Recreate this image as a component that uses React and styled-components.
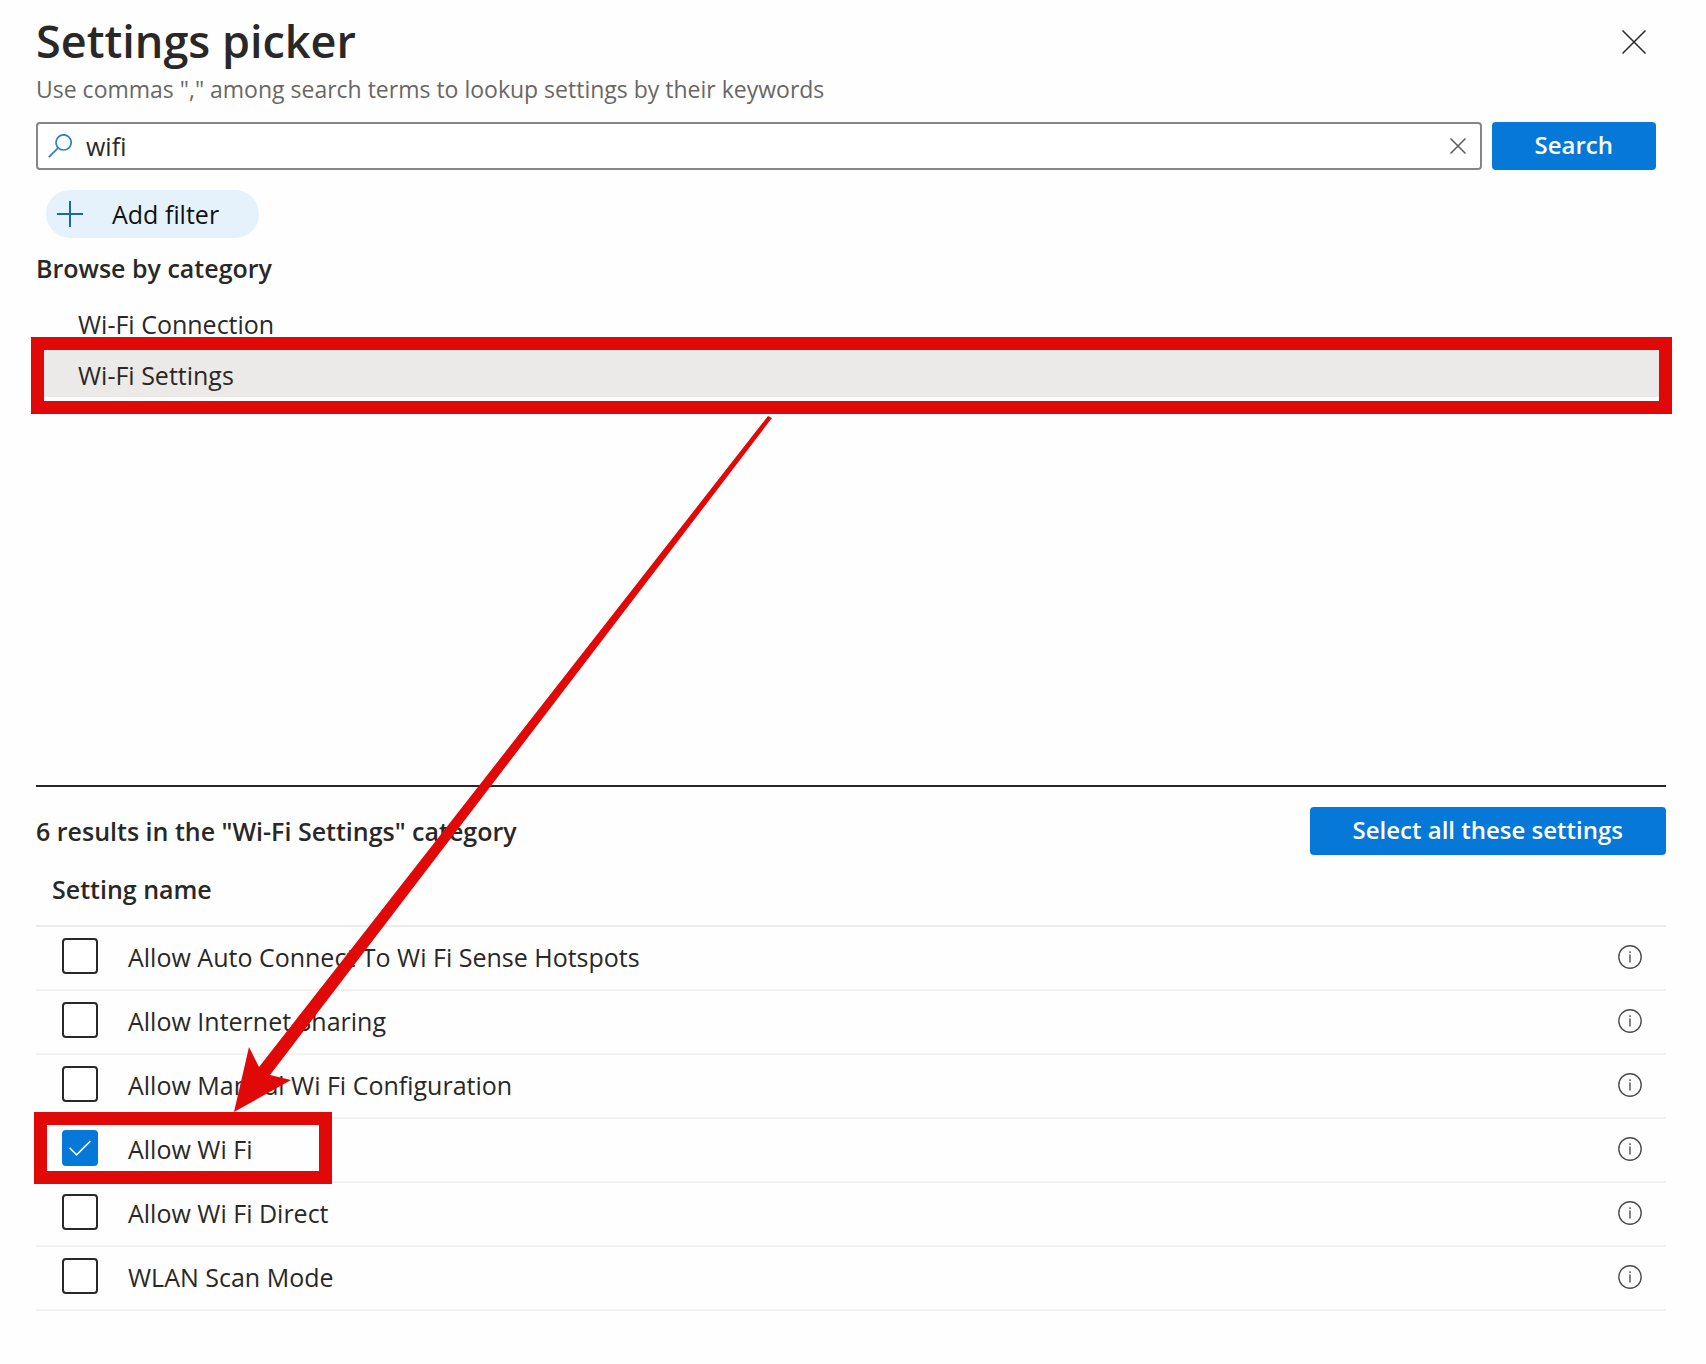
import React, { useState } from "react";
import styled, { createGlobalStyle } from 'styled-components'

const GlobalStyle = createGlobalStyle`
    * {
        box-sizing: border-box;
    }
    body {
        margin: 0;
        background: #fefefe;
        color: #292827;
        font-family: "Open Sans", "Noto Sans", sans-serif;
        font-size: 25px;
        line-height: 32px;
    }
    button, input {
        font: inherit;
        color: inherit;
    }
    svg {
        display: block;
    }
`

const Panel = styled.main`
    position: relative;
    padding: 8px 40px 52px 36px;
`

const Header = styled.header`
    display: flex;
    justify-content: space-between;
    align-items: flex-start;
    padding-right: 8px;
`

const Title = styled.h1`
    margin: 0;
    font-size: 45px;
    line-height: 66px;
    font-weight: 600;
`

const Subtitle = styled.p`
    margin: 0;
    font-size: 23px;
    line-height: 30px;
    color: #696765;
`

const IconButton = styled.button`
    display: flex;
    align-items: center;
    justify-content: center;
    flex: none;
    width: ${props => props.$size}px;
    height: ${props => props.$size}px;
    padding: 0;
    border: none;
    background: none;
    cursor: pointer;
`

const CloseButton = styled(IconButton)`
    margin-top: 10px;
`

const SearchForm = styled.form`
    display: flex;
    gap: 10px;
    margin-top: 18px;
    padding-right: 10px;
`

const SearchBox = styled.div`
    display: flex;
    align-items: center;
    flex: 1;
    height: 48px;
    padding: 0 4px 0 10px;
    border: 2px solid #868686;
    border-radius: 4px;
    background: #fff;
`

const SearchInput = styled.input`
    flex: 1;
    min-width: 0;
    padding: 0 0 0 14px;
    border: none;
    outline: none;
    background: none;
`

const PrimaryButton = styled.button`
    height: 48px;
    padding: 0 43px 2px;
    border: none;
    border-radius: 4px;
    background: #0678d7;
    color: #fff;
    font-size: 24px;
    font-weight: 600;
    cursor: pointer;
`

const FilterButton = styled.button`
    display: flex;
    align-items: center;
    gap: 29px;
    height: 48px;
    margin: 20px 0 0 10px;
    padding: 0 40px 0 11px;
    border: none;
    border-radius: 24px;
    background: #e6f2fb;
    color: #111;
    cursor: pointer;
`

const SectionTitle = styled.h2`
    margin: 0;
    font-size: 25px;
    font-weight: 600;
`

const Browse = styled.section`
    min-height: 549px;
    padding-top: 14px;
    border-bottom: 2px solid #292827;
`

const CategoryList = styled.ul`
    margin: 12px 0 0;
    padding: 0;
    list-style: none;
`

const Category = styled.li`
    position: relative;
    height: 50px;
    margin-bottom: 1px;
    background: ${props => props.$selected ? '#ebeae8' : 'none'};
`

const CategoryButton = styled.button`
    width: 100%;
    height: 100%;
    padding: 6px 42px 0;
    border: none;
    background: none;
    text-align: left;
    cursor: pointer;
`

// Red frame drawn over the category that is picked
const CategoryFrame = styled.span`
    position: absolute;
    inset: -10px -6px -17px -5px;
    border: 13px solid #e00907;
    pointer-events: none;
`

const ResultsBar = styled.div`
    display: flex;
    align-items: center;
    justify-content: space-between;
    padding: 20px 0 18px;
`

const Table = styled.table`
    width: 100%;
    border-collapse: separate;
    border-spacing: 0;
`

const NameHeader = styled.th`
    height: 54px;
    padding: 0 16px 20px;
    border-bottom: 2px solid #edebe9;
    font-weight: 600;
    text-align: left;
`

const Cell = styled.td`
    position: relative;
    height: 64px;
    padding: 0 26px 2px;
    border-bottom: 2px solid #f3f2f1;
`

const InfoCell = styled(Cell)`
    width: 72px;
    padding: 0 24px 2px;
`

const SettingLabel = styled.label`
    display: flex;
    align-items: center;
    gap: 30px;
    cursor: pointer;
`

const CheckWrap = styled.span`
    display: grid;
    place-items: center;
    margin-bottom: 2px;
    & > * {
        grid-area: 1 / 1;
    }
    svg {
        pointer-events: none;
    }
`

const Checkbox = styled.input`
    appearance: none;
    width: 36px;
    height: 36px;
    margin: 0;
    border: 2px solid #292827;
    border-radius: 4px;
    background: #fff;
    &:checked {
        border-color: #0678d7;
        background: #0678d7;
    }
`

const SettingFrame = styled.span`
    position: absolute;
    top: -7px;
    left: -2px;
    width: 298px;
    height: 72px;
    border: 13px solid #e00907;
    pointer-events: none;
`

const Arrow = styled.svg`
    position: absolute;
    top: 414px;
    left: 232px;
    pointer-events: none;
`

const CrossIcon = ({ size, color }) => (
    <svg width={size} height={size} viewBox={`0 0 ${size} ${size}`} stroke={color} strokeWidth='1.5' aria-hidden='true'>
        <path d={`M0.5 0.5L${size - 0.5} ${size - 0.5}M${size - 0.5} 0.5L0.5 ${size - 0.5}`} />
    </svg>
)

const SearchIcon = () => (
    <svg width='24' height='24' viewBox='0 0 24 24' fill='none' stroke='#2f7fcb' strokeWidth='1.7' aria-hidden='true'>
        <circle cx='15.6' cy='8.4' r='7.6' />
        <path d='M10.2 13.8L0.8 23.2' />
    </svg>
)

const PlusIcon = () => (
    <svg width='26' height='26' viewBox='0 0 26 26' stroke='#1c66ad' strokeWidth='2' aria-hidden='true'>
        <path d='M13 0V26M0 13H26' />
    </svg>
)

const CheckIcon = () => (
    <svg width='22' height='16' viewBox='0 0 22 16' fill='none' stroke='#fff' strokeWidth='1.6' aria-hidden='true'>
        <path d='M0.6 7.8L7.6 14.8L21.4 1' />
    </svg>
)

const InfoIcon = () => (
    <svg width='24' height='24' viewBox='0 0 24 24' fill='none' stroke='#4f4d4b' strokeWidth='1.4' aria-hidden='true'>
        <circle cx='12' cy='12' r='11.2' />
        <path d='M12 9.6V17.6M12 6.2V8' />
    </svg>
)

const categories = ['Wi-Fi Connection', 'Wi-Fi Settings']

const settings = [
    'Allow Auto Connect To Wi Fi Sense Hotspots',
    'Allow Internet Sharing',
    'Allow Manual Wi Fi Configuration',
    'Allow Wi Fi',
    'Allow Wi Fi Direct',
    'WLAN Scan Mode',
]

const App = () => {
    const [term, setTerm] = useState('wifi');
    const [category, setCategory] = useState('Wi-Fi Settings');
    const [checked, setChecked] = useState(['Allow Wi Fi']);

    const toggle = (name) => {
        setChecked(checked.includes(name) ? checked.filter(c => c !== name) : [...checked, name])
    }

    return (
        <Panel>
            <GlobalStyle />
            <Header>
                <div>
                    <Title>Settings picker</Title>
                    <Subtitle>Use commas "," among search terms to lookup settings by their keywords</Subtitle>
                </div>
                <CloseButton $size={48} aria-label='Close'>
                    <CrossIcon size={24} color='#292827' />
                </CloseButton>
            </Header>

            <SearchForm onSubmit={e => e.preventDefault()}>
                <SearchBox>
                    <SearchIcon />
                    <SearchInput
                        type='text'
                        name='search'
                        aria-label='Search settings'
                        value={term}
                        onChange={e => setTerm(e.target.value)}
                    />
                    <IconButton $size={36} type='button' aria-label='Clear' onClick={() => setTerm('')}>
                        <CrossIcon size={16} color='#5d5b59' />
                    </IconButton>
                </SearchBox>
                <PrimaryButton type='submit'>Search</PrimaryButton>
            </SearchForm>
            <FilterButton>
                <PlusIcon />
                Add filter
            </FilterButton>

            <Browse>
                <SectionTitle>Browse by category</SectionTitle>
                <CategoryList>
                    {categories.map(name => (
                        <Category key={name} $selected={name === category}>
                            <CategoryButton onClick={() => setCategory(name)}>{name}</CategoryButton>
                            {name === category && <CategoryFrame />}
                        </Category>
                    ))}
                </CategoryList>
            </Browse>

            <ResultsBar>
                <SectionTitle>6 results in the "Wi-Fi Settings" category</SectionTitle>
                <PrimaryButton onClick={() => setChecked(settings)}>Select all these settings</PrimaryButton>
            </ResultsBar>
            <Table>
                <thead>
                    <tr>
                        <NameHeader colSpan={2}>Setting name</NameHeader>
                    </tr>
                </thead>
                <tbody>
                    {settings.map(name => (
                        <tr key={name}>
                            <Cell>
                                <SettingLabel>
                                    <CheckWrap>
                                        <Checkbox
                                            type='checkbox'
                                            checked={checked.includes(name)}
                                            onChange={() => toggle(name)}
                                        />
                                        {checked.includes(name) && <CheckIcon />}
                                    </CheckWrap>
                                    {name}
                                </SettingLabel>
                                {name === 'Allow Wi Fi' && <SettingFrame />}
                            </Cell>
                            <InfoCell>
                                <IconButton $size={24} aria-label={`About ${name}`}>
                                    <InfoIcon />
                                </IconButton>
                            </InfoCell>
                        </tr>
                    ))}
                </tbody>
            </Table>

            <Arrow width='542' height='700' viewBox='0 0 542 700' fill='#e00907' aria-hidden='true'>
                <path d='M536 2L540 4L38 661L59 666L2 698L17 633L27 653Z' />
            </Arrow>
        </Panel>
    )
}

export default App;
